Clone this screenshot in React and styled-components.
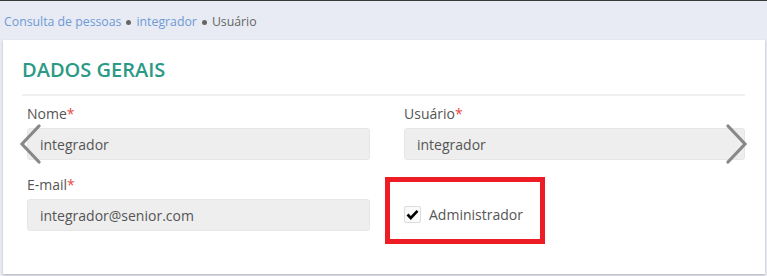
import React from 'react';
import styled, { createGlobalStyle } from 'styled-components';

const GlobalStyle = createGlobalStyle`
  html, body {
    margin: 0;
    padding: 0;
  }
  body {
    background-color: #e8ebf3;
    font-family: "Open Sans", "Liberation Sans", sans-serif;
    color: #555;
  }
`;

const Page = styled.div`
  width: 767px;
  height: 276px;
  border-top: 1px solid #3a3a3a;
  box-sizing: border-box;
  overflow: hidden;
`;

const Breadcrumb = styled.div`
  height: 39px;
  display: flex;
  align-items: center;
  gap: 5px;
  padding: 2px 0 0 4px;
  box-sizing: border-box;
  font-size: 12.3px;
`;

const Crumb = styled.span`
  color: ${({ link }) => (link ? '#6e9ad6' : '#666')};
`;

const Dot = styled.span`
  width: 5px;
  height: 5px;
  border-radius: 50%;
  background-color: #666;
  margin-top: 2px;
`;

const Card = styled.div`
  position: relative;
  margin: 0 2px 0 3px;
  height: 234px;
  background-color: #fff;
  box-shadow: 0 1px 2px rgba(0, 0, 0, 0.25);
  padding: 16px 20px 0 19px;
  box-sizing: border-box;
`;

const Title = styled.h2`
  margin: 0;
  font-size: 20px;
  font-weight: 600;
  color: #2a9a86;
  line-height: 28px;
  padding-bottom: 10px;
  border-bottom: 2px solid #f0f0f0;
`;

const Grid = styled.div`
  display: grid;
  grid-template-columns: 343px 341px;
  column-gap: 34px;
  row-gap: 15px;
  padding: 8px 0 0 5px;
`;

const Field = styled.div`
  position: relative;
  display: flex;
  flex-direction: column;
  gap: 4px;
`;

const Label = styled.label`
  font-size: 14px;
  line-height: 20px;
  color: #555;
`;

const Required = styled.span`
  color: #e8473f;
`;

const Input = styled.div`
  height: 32px;
  box-sizing: border-box;
  background-color: #eeeeee;
  border: 1px solid #e6e6e6;
  border-radius: 3px;
  padding: 0 12px;
  display: flex;
  align-items: center;
  font-size: 14px;
  color: #555;
`;

const CheckRow = styled.div`
  display: flex;
  align-items: center;
  gap: 8px;
  height: 100%;
  padding-top: 23px;
  box-sizing: border-box;
`;

const CheckBox = styled.span`
  width: 17px;
  height: 17px;
  box-sizing: border-box;
  border: 1px solid #dcdcdc;
  border-radius: 2px;
  background-color: #fafafa;
  display: flex;
  align-items: center;
  justify-content: center;
`;

const Highlight = styled.div`
  position: absolute;
  left: -19px;
  top: 2px;
  width: 160px;
  height: 67px;
  box-sizing: border-box;
  border: 5px solid #ee1c25;
`;

const Arrow = styled.svg`
  position: absolute;
  top: 84px;
  ${({ side }) => (side === 'left' ? 'left: 15px;' : 'right: 16px;')}
`;

const Chevron = ({ side }) => (
  <Arrow side={side} width="24" height="40" viewBox="0 0 24 40">
    <polyline
      points={side === 'left' ? '21,2 4,20 21,38' : '3,2 20,20 3,38'}
      fill="none"
      stroke="#888"
      strokeWidth="3.2"
      strokeLinecap="round"
      strokeLinejoin="miter"
    />
  </Arrow>
);

const App = () => (
  <Page>
    <GlobalStyle />
    <Breadcrumb>
      <Crumb link>Consulta de pessoas</Crumb>
      <Dot />
      <Crumb link>integrador</Crumb>
      <Dot />
      <Crumb>Usuário</Crumb>
    </Breadcrumb>
    <Card>
      <Title>DADOS GERAIS</Title>
      <Grid>
        <Field>
          <Label>Nome<Required>*</Required></Label>
          <Input>integrador</Input>
        </Field>
        <Field>
          <Label>Usuário<Required>*</Required></Label>
          <Input>integrador</Input>
        </Field>
        <Field>
          <Label>E-mail<Required>*</Required></Label>
          <Input>integrador@senior.com</Input>
        </Field>
        <Field>
          <CheckRow>
            <CheckBox>
              <svg width="13" height="11" viewBox="0 0 13 11">
                <polyline points="1.5,5.5 4.8,9 11.5,1.8" fill="none" stroke="#000" strokeWidth="2.6" />
              </svg>
            </CheckBox>
            <Label>Administrador</Label>
          </CheckRow>
          <Highlight />
        </Field>
      </Grid>
      <Chevron side="left" />
      <Chevron side="right" />
    </Card>
  </Page>
);

export default App;
